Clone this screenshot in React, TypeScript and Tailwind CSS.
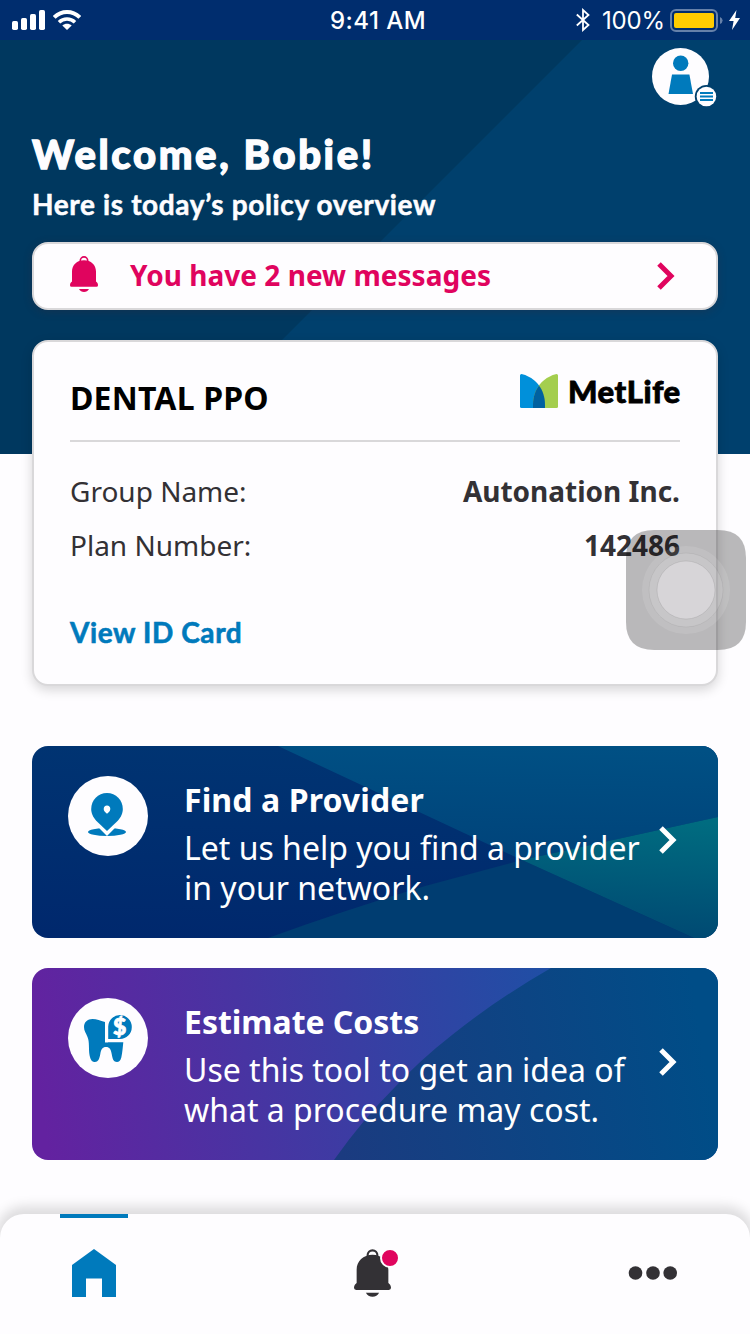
import React from "react";

const noto = "font-['Noto_Sans',sans-serif]";
const lato = "font-['Lato',sans-serif]";

function Bell({ className }: { className: string }) {
  return (
    <svg viewBox="0 0 28 36" className={className} fill="currentColor">
      <circle cx="14" cy="4.6" r="3.7" fill="none" stroke="currentColor" strokeWidth="1.6" />
      <path d="M14 4.2C21 4.2 26 9 26 15.5V25.5C27.2 26.3 28 27.6 28 29.2Q28 30.8 26.4 30.8H1.6Q0 30.8 0 29.2C0 27.6.8 26.3 2 25.5V15.5C2 9 7 4.2 14 4.2Z" />
      <path d="M9 33H19C18 35 16.2 36 14 36S10 35 9 33Z" />
    </svg>
  );
}

function Chevron({ className }: { className: string }) {
  return (
    <svg viewBox="0 0 18 28" className={className} fill="none" stroke="currentColor" strokeWidth="5">
      <path d="M2 2L14 14L2 26" />
    </svg>
  );
}

function StatusBar() {
  return (
    <div className="flex h-10 shrink-0 items-center bg-[#002d6e] font-['Inter',sans-serif] text-2xl text-white">
      <div className="flex flex-1 items-center pl-3">
        <svg width="33" height="20" viewBox="0 0 33 20" fill="white">
          <rect x="0" y="11" width="6" height="9" rx="1.7" />
          <rect x="9" y="8" width="6" height="12" rx="1.7" />
          <rect x="18" y="4" width="6" height="16" rx="1.7" />
          <rect x="27" y="0" width="6" height="20" rx="1.7" />
        </svg>
        <svg className="ml-2" width="28" height="20" viewBox="0 0 28 20" fill="none" stroke="white">
          <path d="M1.2 7.4C8.5.3 19.5.3 26.8 7.4" strokeWidth="4" />
          <path d="M6 12.2C10.5 8 17.5 8 22 12.2" strokeWidth="3.6" />
          <path d="M14 20L9.3 15.4C12 13.2 16 13.2 18.7 15.4Z" fill="white" stroke="none" />
        </svg>
      </div>
      <div className="flex w-[98px] justify-center pt-0.5 pl-1 whitespace-nowrap font-medium tracking-[0.45px]">9:41 AM</div>
      <div className="flex flex-1 items-center justify-end pr-[10px]">
        <svg width="14" height="24" viewBox="0 0 14 24" fill="none" stroke="white" strokeWidth="1.8">
          <path d="M.8 6.5L12.5 17L7 22V2L12.5 7L.8 17.5" />
        </svg>
        <span className="ml-3 w-[62px] pt-0.5 whitespace-nowrap tracking-[-0.2px]">100%</span>
        <svg className="mt-px ml-[6px]" width="53" height="24" viewBox="0 0 53 24">
          <rect x="1" y="1" width="46" height="21" rx="5" fill="none" stroke="#6681a9" strokeWidth="2" />
          <rect x="4" y="4" width="40" height="15" rx="2" fill="#ffcc00" />
          <path d="M50 8Q52.6 9 52.6 11.5T50 15Z" fill="#6681a9" />
        </svg>
        <svg className="ml-[6px]" width="11" height="20" viewBox="0 0 11 20" fill="white">
          <path d="M7.5 0L0 11H4.6L3 20L11 8H6.2Z" />
        </svg>
      </div>
    </div>
  );
}

function Avatar() {
  return (
    <svg className="h-[60px] w-[66px]" viewBox="0 0 66 60">
      <circle cx="28.5" cy="28.5" r="28.5" fill="#fefdff" />
      <circle cx="28.7" cy="15.3" r="7.7" fill="#007abc" />
      <path d="M20 26.5H37.4L41 46H16.5Z" fill="#007abc" />
      <circle cx="54.4" cy="48.5" r="11.6" fill="#00406d" />
      <circle cx="54.4" cy="48.5" r="9.8" fill="#fefdff" />
      <path d="M48 45H61M48 48.5H61M48 52H61" stroke="#007abc" strokeWidth="2" />
    </svg>
  );
}

function MetLife() {
  return (
    <div className="flex items-center">
      <svg width="38" height="34" viewBox="0 0 38 34">
        <path d="M1.5 0C11 2 25 11 25 31V34H1.5Q0 34 0 32.5V1.5Q0 0 1.5 0Z" fill="#0090da" />
        <path d="M36.5 0C27 2 13 11 13 31V34H36.5Q38 34 38 32.5V1.5Q38 0 36.5 0Z" fill="#a4ce4e" />
        <path d="M19 11.5C15.2 16.5 13 23 13 31V34H25V31C25 23 22.8 16.5 19 11.5Z" fill="#0061a0" />
      </svg>
      <span className={`${lato} ml-[10px] w-[112px] whitespace-nowrap text-[31px] leading-9 font-black tracking-[0.55px] text-black [-webkit-text-stroke:0.8px_#000]`}>
        MetLife
      </span>
    </div>
  );
}

function Row({ label, value }: { label: string; value: string }) {
  return (
    <div className="flex h-[54px] items-center justify-between text-[28px] text-[#333135]">
      <span>{label}</span>
      <span className="font-bold">{value}</span>
    </div>
  );
}

function ProviderArt() {
  return (
    <svg className="absolute inset-0 h-full w-full" viewBox="0 0 686 192" preserveAspectRatio="none">
      <defs>
        <linearGradient id="pBase" x1="0.3" y1="0" x2="0.2" y2="1">
          <stop offset="0" stopColor="#003472" />
          <stop offset="1" stopColor="#00286d" />
        </linearGradient>
        <linearGradient id="pTop" x1="0.6" y1="0" x2="0.5" y2="1">
          <stop offset="0" stopColor="#005084" />
          <stop offset="1" stopColor="#00437a" />
        </linearGradient>
        <linearGradient id="pRight" x1="0.5" y1="0" x2="0.4" y2="1">
          <stop offset="0" stopColor="#006c80" />
          <stop offset="1" stopColor="#004872" />
        </linearGradient>
      </defs>
      <rect width="686" height="192" fill="url(#pBase)" />
      <path d="M246 0L490 114L686 71V0Z" fill="url(#pTop)" />
      <path d="M236 192Q310 165 393 140L490 114L662 192Z" fill="#003d71" />
      <path d="M490 114L686 71V192H662Z" fill="url(#pRight)" />
    </svg>
  );
}

function CostArt() {
  return (
    <svg className="absolute inset-0 h-full w-full" viewBox="0 0 686 192" preserveAspectRatio="none">
      <defs>
        <linearGradient id="cBase" gradientUnits="userSpaceOnUse" x1="0" y1="80" x2="520" y2="0">
          <stop offset="0" stopColor="#6322a0" />
          <stop offset="1" stopColor="#1f4fa5" />
        </linearGradient>
        <linearGradient id="cDark" gradientUnits="userSpaceOnUse" x1="310" y1="192" x2="680" y2="130">
          <stop offset="0" stopColor="#1b3b80" />
          <stop offset="1" stopColor="#004d87" />
        </linearGradient>
      </defs>
      <rect width="686" height="192" fill="url(#cBase)" />
      <path d="M302 192Q331 151 363 119Q388 92 420 67Q465 31 519 0H686V192Z" fill="url(#cDark)" />
    </svg>
  );
}

function PinIcon() {
  return (
    <svg width="80" height="80" viewBox="0 0 80 80">
      <ellipse cx="39" cy="56" rx="19" ry="4" fill="#007abc" />
      <path d="M31 50.500L39 58.500L47 50.500" fill="#fff" stroke="#fff" strokeWidth="2" />
      <path d="M39 17C48 17 54.8 24 54.8 33C54.8 38.5 52 42.5 48.5 46L39 55L29.5 46C26 42.5 23.2 38.5 23.2 33C23.2 24 30 17 39 17Z" fill="#007abc" />
      <path d="M39 29.5C41 29.5 42.3 31 42.3 33C42.3 35 40.5 36.5 39 37.7C37.5 36.5 35.7 35 35.7 33C35.7 31 37 29.5 39 29.5Z" fill="#fff" />
    </svg>
  );
}

function ToothIcon() {
  return (
    <svg width="80" height="80" viewBox="0 0 80 80">
      <path
        d="M16 29C16 24 19.500 21 24.500 21C29 21 32 22.500 37 24V44.300H55.300C54.800 49 54.500 54 53.300 59.500C52.300 63 51 64 49 64C45.500 64 44.500 61 43.700 56C43 51.500 41.500 49 38 49C34.500 49 33 51.500 32.300 56C31.500 61 30 64 27 64C24 64 22.600 62 21.600 57.500C20.400 51 21.700 44 19.500 39C18 35 16 33 16 29Z"
        fill="#007abc"
      />
      <path d="M37 41H40V44.300H37Z" fill="#fff" />
      <path d="M40.200 41V28.500A11.800 12 0 1 1 52 41Z" fill="#007abc" />
      <text x="51.600" y="36.500" textAnchor="middle" fontFamily="Lato, sans-serif" fontWeight="900" fontSize="23" fill="#fff" stroke="#fff" strokeWidth="0.8">$</text>
    </svg>
  );
}

function ActionCard(props: { art: React.ReactNode; icon: React.ReactNode; title: string; lines: string[]; titleClass: string }) {
  return (
    <div className="relative flex h-48 overflow-hidden rounded-2xl pl-9 text-white">
      {props.art}
      <div className="relative mt-[30px] flex h-20 w-20 shrink-0 rounded-full bg-[#fefdff]">{props.icon}</div>
      <div className="relative ml-9 flex-1 whitespace-nowrap pt-[30px]">
        <h3 className={`mb-1 h-[48px] text-[32px] leading-[48px] font-bold ${props.titleClass}`}>{props.title}</h3>
        <p className="text-[32px] leading-10">
          {props.lines[0]}
          <br />
          {props.lines[1]}
        </p>
      </div>
      <Chevron className="relative mt-20 mr-[41px] h-7 w-[18px]" />
    </div>
  );
}

function BottomNav() {
  return (
    <nav className="relative mt-auto flex h-[120px] justify-between rounded-t-3xl bg-[#fefdff] pr-[73px] pl-[60px] shadow-[0_-4px_12px_4px_rgba(0,0,0,0.13)]">
      <div className="flex w-[68px] flex-col items-center border-t-4 border-[#007abc]">
        <svg className="mt-[31px]" width="44" height="48" viewBox="0 0 44 48">
          <path d="M22 0L44 16V48H30V29.500H14V48H0V16Z" fill="#007abc" />
        </svg>
      </div>
      <div className="relative mt-[35px] mr-3 h-12 w-[37px]">
        <Bell className="h-12 w-[37px] text-[#333135]" />
        <span className="absolute -top-px -right-[9px] h-5 w-5 rounded-full border-2 border-[#fefdff] bg-[#e0045e]" />
      </div>
      <svg className="mt-[52px]" width="49" height="14" viewBox="0 0 49 14" fill="#333135">
        <circle cx="7.500" cy="7" r="6.800" />
        <circle cx="25" cy="7" r="6.800" />
        <circle cx="42.200" cy="7" r="6.800" />
      </svg>
    </nav>
  );
}

export default function App() {
  return (
    <div className={`${noto} relative flex h-[1334px] w-[750px] flex-col overflow-hidden bg-[#fefdff]`}>
      <StatusBar />
      <header className="relative h-[414px] shrink-0 bg-[#00385f]">
        <svg className="absolute inset-0 h-full w-full" viewBox="0 0 750 414">
          <path d="M582 0H750V414H168Z" fill="#00406d" />
        </svg>
        <div className="relative px-8 pt-2">
          <div className="flex h-[60px] justify-end">
            <Avatar />
          </div>
          <h1 className={`${lato} mt-[22px] text-[40px] leading-[48px] font-black tracking-[2.65px] text-[#fefdff] [-webkit-text-stroke:1.3px_#fefdff]`}>
            Welcome, Bobie!
          </h1>
          <p className={`${lato} mt-[10px] text-[28px] leading-8 font-bold tracking-[0.63px] text-[#fefdff] [-webkit-text-stroke:0.5px_#fefdff]`}>
            Here is today’s policy overview
          </p>
          <div className="mt-[22px] flex h-[68px] items-center rounded-2xl border-2 border-[#d9d8da] bg-[#fefdff] pr-[41px] pl-9 text-[#e0045e] shadow-[0_2px_8px_rgba(60,40,50,0.3)]">
            <Bell className="mb-1 h-9 w-7" />
            <span className="mb-0.5 ml-8 flex-1 text-[28px] leading-10 font-bold tracking-[0.03px]">You have 2 new messages</span>
            <Chevron className="h-7 w-[18px]" />
          </div>
        </div>
      </header>
      <main className="relative -mt-[114px] px-8">
        <section className="h-[346px] rounded-2xl border-2 border-[#d9d8da] bg-[#fefdff] px-9 shadow-[0_4px_12px_rgba(0,0,0,0.16)]">
          <div className="flex h-[100px] items-start justify-between border-b-2 border-[#d9d8da]">
            <h2 className="mt-8 text-[32px] leading-[48px] font-bold tracking-[0.18px] text-black">DENTAL PPO</h2>
            <div className="mt-[31px]">
              <MetLife />
            </div>
          </div>
          <div className="pt-[22px]">
            <Row label="Group Name:" value="Autonation Inc." />
            <Row label="Plan Number:" value="142486" />
          </div>
          <a className={`${lato} mt-10 block text-[28px] leading-10 font-bold tracking-[0.6px] text-[#007abc] [-webkit-text-stroke:0.6px_#007abc]`}>View ID Card</a>
        </section>
        <div className="mt-[60px] flex flex-col gap-[30px]">
          <ActionCard
            art={<ProviderArt />}
            icon={<PinIcon />}
            title="Find a Provider"
            lines={["Let us help you find a provider", "in your network."]}
            titleClass="tracking-[0.1px]"
          />
          <ActionCard
            art={<CostArt />}
            icon={<ToothIcon />}
            title="Estimate Costs"
            lines={["Use this tool to get an idea of", "what a procedure may cost."]}
            titleClass="tracking-[-0.03px]"
          />
        </div>
      </main>
      <BottomNav />
      <svg className="absolute top-[530px] left-[626px]" width="120" height="120" viewBox="0 0 120 120">
        <path d="M28 0H92Q120 0 120 28V92Q120 120 92 120H28Q0 120 0 92V28Q0 0 28 0Z" fill="#000" fillOpacity="0.27" />
        <circle cx="60" cy="60" r="44" fill="#fff" fillOpacity="0.11" />
        <circle cx="60" cy="60" r="37" fill="#fff" fillOpacity="0.12" stroke="#000" strokeOpacity="0.05" />
        <circle cx="60" cy="60" r="29" fill="#d7d5d8" stroke="#000" strokeOpacity="0.08" />
      </svg>
    </div>
  );
}
